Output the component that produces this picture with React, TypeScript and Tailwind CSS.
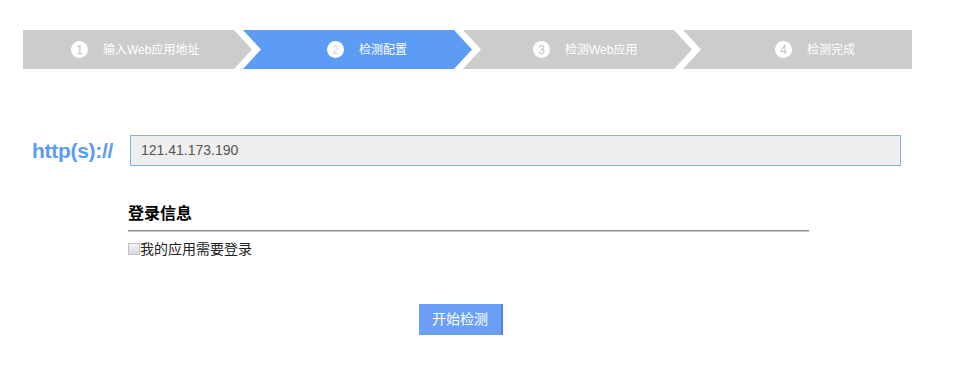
import React from 'react';

const font = { fontFamily: '"Liberation Sans", "Noto Sans CJK SC", sans-serif' };

type Step = { n: number; label: string; active?: boolean; pad: string; shape: string; cls: string };

const steps: Step[] = [
  {
    n: 1,
    label: '输入Web应用地址',
    pad: 'pl-[48px]',
    shape: '[clip-path:polygon(0_0,calc(100%-18px)_0,100%_50%,calc(100%-18px)_100%,0_100%)]',
    cls: '',
  },
  {
    n: 2,
    label: '检测配置',
    active: true,
    pad: 'pl-[84px]',
    shape: '[clip-path:polygon(0_0,calc(100%-18px)_0,100%_50%,calc(100%-18px)_100%,0_100%,18px_50%)]',
    cls: '-ml-[9px]',
  },
  {
    n: 3,
    label: '检测Web应用',
    pad: 'pl-[70px]',
    shape: '[clip-path:polygon(0_0,calc(100%-18px)_0,100%_50%,calc(100%-18px)_100%,0_100%,18px_50%)]',
    cls: '-ml-[9px]',
  },
  {
    n: 4,
    label: '检测完成',
    pad: 'pl-[92px]',
    shape: '[clip-path:polygon(0_0,100%_0,100%_100%,0_100%,18px_50%)]',
    cls: '-ml-[9px]',
  },
];

const StepBar: React.FC = () => (
  <div className="flex h-[39px] ml-[23px]">
    {steps.map(s => (
      <div
        key={s.n}
        className={`w-[229px] h-full flex items-center ${s.pad} ${s.shape} ${s.cls} ${
          s.active ? 'bg-[#5c9cf4]' : 'bg-[#cccccc]'
        }`}
      >
        <span
          className={`w-[17px] h-[17px] rounded-full bg-white flex items-center justify-center text-[12px] ${
            s.active ? 'text-[#c8d8ee]' : 'text-[#c4c4c4]'
          }`}
        >
          {s.n}
        </span>
        <span className="ml-[15px] text-[12px] text-white">{s.label}</span>
      </div>
    ))}
  </div>
);

export default function App() {
  return (
    <div className="w-[953px] h-[380px] bg-white pt-[30px]" style={font}>
      <StepBar />

      <div className="flex items-center mt-[66px]">
        <div className="w-[130px] pl-[32px] text-[21px] font-bold text-[#5b9cf2] tracking-[-0.3px]">
          http(s)://
        </div>
        <div className="w-[771px] h-[31px] border border-[#86aee0] bg-[#efefef] flex items-center pl-[10px] text-[14px] text-[#555555]">
          121.41.173.190
        </div>
      </div>

      <div className="ml-[128px] w-[681px] mt-[36px]">
        <div className="text-[16px] font-bold text-black leading-[22px]">登录信息</div>
        <div className="mt-[5px] h-[2px] bg-[#8a8a8a] border-b border-[#c8c8c8]" />
        <label className="flex items-center mt-[7px] text-[14px] text-[#222222] leading-[20px]">
          <span className="w-[12px] h-[12px] border border-[#c2c2c2] bg-gradient-to-b from-[#f4f4f4] to-[#d8d8d8]" />
          我的应用需要登录
        </label>
      </div>

      <div className="mt-[45px] ml-[419px]">
        <button className="w-[84px] h-[31px] bg-[#6a9ff5] border-r-2 border-[#4d86e0] text-white text-[14px]">
          开始检测
        </button>
      </div>
    </div>
  );
}
